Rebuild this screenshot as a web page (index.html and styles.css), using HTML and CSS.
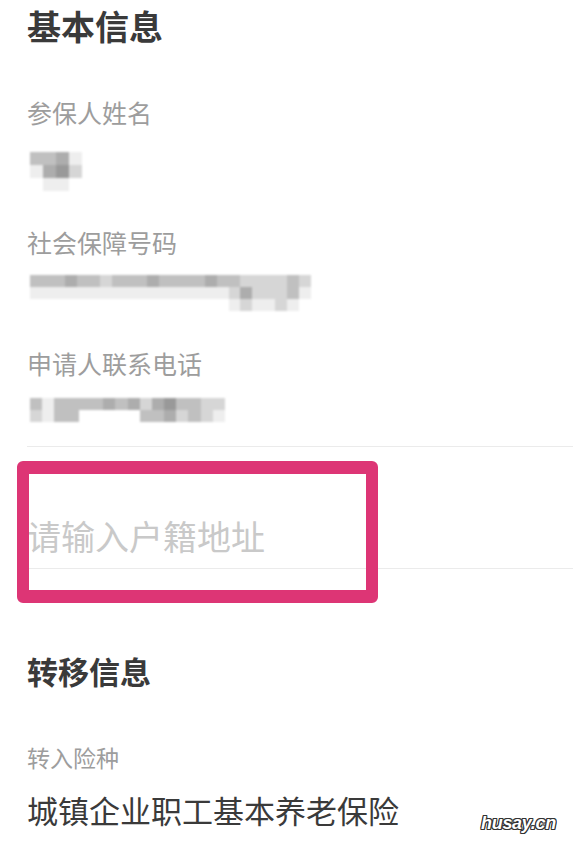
FILE: index.html
```html
<!DOCTYPE html>
<html lang="zh-CN">
<head>
<meta charset="utf-8">
<link rel="stylesheet" href="styles.css">
</head>
<body>
<main class="page">
  <h2 class="section-title first">基本信息</h2>

  <div class="field f1">
    <div class="label">参保人姓名</div>
    <div class="mosaic m-name">
      <span class="g3"></span><span class="g3"></span><span class="g4"></span><span class="g1"></span>
      <span class="g1"></span><span class="g4"></span><span class="g5"></span><span class="g2"></span>
      <span class="g0"></span><span class="g1"></span><span class="g1"></span><span class="g0"></span>
    </div>
  </div>

  <div class="field f2">
    <div class="label">社会保障号码</div>
    <div class="mosaic m-ssn">
      <span class="g3"></span><span class="g3"></span><span class="g3"></span><span class="g4"></span><span class="g3"></span><span class="g3"></span><span class="g2"></span><span class="g3"></span><span class="g3"></span><span class="g3"></span><span class="g4"></span><span class="g3"></span><span class="g3"></span><span class="g3"></span><span class="g3"></span><span class="g4"></span><span class="g3"></span><span class="g3"></span><span class="g2"></span><span class="g2"></span><span class="g2"></span><span class="g2"></span><span class="g3"></span><span class="g2"></span>
      <span class="g1"></span><span class="g1"></span><span class="g1"></span><span class="g1"></span><span class="g1"></span><span class="g1"></span><span class="g1"></span><span class="g1"></span><span class="g1"></span><span class="g1"></span><span class="g1"></span><span class="g1"></span><span class="g1"></span><span class="g1"></span><span class="g1"></span><span class="g1"></span><span class="g1"></span><span class="g2"></span><span class="g4"></span><span class="g2"></span><span class="g2"></span><span class="g2"></span><span class="g3"></span><span class="g1"></span>
      <span class="g0"></span><span class="g0"></span><span class="g0"></span><span class="g0"></span><span class="g0"></span><span class="g0"></span><span class="g0"></span><span class="g0"></span><span class="g0"></span><span class="g0"></span><span class="g0"></span><span class="g0"></span><span class="g0"></span><span class="g0"></span><span class="g0"></span><span class="g0"></span><span class="g0"></span><span class="g1"></span><span class="g2"></span><span class="g1"></span><span class="g1"></span><span class="g2"></span><span class="g1"></span><span class="g0"></span>
    </div>
  </div>

  <div class="field f3">
    <div class="label">申请人联系电话</div>
    <div class="mosaic m-phone">
      <span class="g3"></span><span class="g1"></span><span class="g3"></span><span class="g3"></span><span class="g3"></span><span class="g3"></span><span class="g4"></span><span class="g3"></span><span class="g4"></span><span class="g2"></span><span class="g4"></span><span class="g5"></span><span class="g3"></span><span class="g3"></span><span class="g2"></span><span class="g2"></span>
      <span class="g2"></span><span class="g1"></span><span class="g3"></span><span class="g3"></span><span class="g0"></span><span class="g0"></span><span class="g0"></span><span class="g0"></span><span class="g0"></span><span class="g3"></span><span class="g3"></span><span class="g4"></span><span class="g2"></span><span class="g3"></span><span class="g2"></span><span class="g1"></span>
    </div>
  </div>

  <div class="divider d1"></div>

  <div class="input-row">
    <span class="placeholder">请输入户籍地址</span>
  </div>

  <div class="divider d2"></div>

  <h2 class="section-title second">转移信息</h2>

  <div class="field f4">
    <div class="label small">转入险种</div>
    <div class="value">城镇企业职工基本养老保险</div>
  </div>
</main>

<div class="highlight"></div>
<div class="watermark">husay.cn</div>
</body>
</html>
```

FILE: styles.css
```css
html, body {
  margin: 0;
  padding: 0;
  background: #ffffff;
}

body {
  width: 573px;
  height: 847px;
  overflow: hidden;
  position: relative;
  font-family: "Noto Sans CJK SC", "Noto Sans", sans-serif;
}

.page {
  padding: 9px 0 0 27px;
}

.section-title {
  margin: 0;
  font-weight: 700;
  color: #3a3a3a;
  line-height: 1;
}

.section-title.first {
  font-size: 34px;
}

.section-title.second {
  font-size: 31px;
  margin-top: 86px;
}

.field .label {
  font-size: 25px;
  line-height: 1;
  color: #9d9d9d;
}

.field .label.small {
  font-size: 23px;
}

.f1 { margin-top: 57px; }
.f2 { margin-top: 39px; }
.f3 { margin-top: 40px; }
.f4 { margin-top: 60px; }

.mosaic {
  display: grid;
  grid-auto-rows: 12px;
  filter: blur(0.8px);
}

.m-name {
  grid-template-columns: repeat(4, 13px);
  grid-auto-rows: 13px;
  margin-top: 27px;
  margin-left: 3px;
}

.m-ssn {
  grid-template-columns: repeat(24, 11.7px);
  margin-top: 20px;
  margin-left: 3px;
}

.m-phone {
  grid-template-columns: repeat(16, 12.2px);
  margin-top: 22px;
  margin-left: 3px;
}

.g0 { background: #ffffff; }
.g1 { background: #eeeeee; }
.g2 { background: #d6d6d6; }
.g3 { background: #c0c0c0; }
.g4 { background: #adadad; }
.g5 { background: #999999; }

.divider {
  height: 1px;
  background: #ebebeb;
}

.d1 { margin-top: 24px; }
.d2 { margin-top: 15px; }

.input-row {
  padding-top: 72px;
}

.placeholder {
  display: block;
  font-size: 34px;
  line-height: 1;
  color: #c9c9c9;
}

.value {
  margin-top: 25px;
  font-size: 31px;
  line-height: 1;
  color: #3a3a3a;
}

.highlight {
  position: absolute;
  left: 17px;
  top: 461px;
  width: 337px;
  height: 116px;
  border: 12px solid #dd3575;
  border-top-width: 13px;
  border-bottom-width: 13px;
  border-radius: 6px;
}

.watermark {
  position: absolute;
  left: 481px;
  top: 814px;
  font-family: "Liberation Sans", Arial, sans-serif;
  font-weight: 700;
  font-style: italic;
  font-size: 18px;
  line-height: 1;
  color: #ffffff;
  letter-spacing: -0.3px;
  text-shadow:
    -1px -1px 0 #333, 1px -1px 0 #333, -1px 1px 0 #333, 1px 1px 0 #333,
    0 -1px 0 #333, 0 1px 0 #333, -1px 0 0 #333, 1px 0 0 #333;
}
```
